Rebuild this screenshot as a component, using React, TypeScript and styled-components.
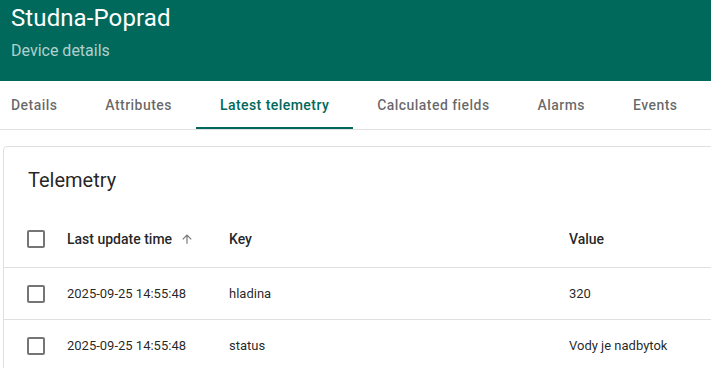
import React from "react";
import styled, { createGlobalStyle } from "styled-components";

const Global = createGlobalStyle`
  html, body { margin: 0; padding: 0; background: #fff; overflow: hidden; }
  body { font-family: Roboto, "Noto Sans", sans-serif; width: 711px; height: 368px; }
`;

const Page = styled.div`
  width: 711px;
  height: 368px;
  overflow: hidden;
  display: flex;
  flex-direction: column;
  & > * { flex-shrink: 0; }
`;

const Header = styled.header`
  background: #00695c;
  height: 81px;
  box-sizing: border-box;
  padding: 2px 11px 0;
  color: #fff;
  display: flex;
  flex-direction: column;
`;

const Title = styled.h1`
  margin: 0;
  font-size: 24px;
  font-weight: 400;
  line-height: 32px;
  letter-spacing: 0.1px;
`;

const Subtitle = styled.div`
  margin-top: 5px;
  font-size: 16px;
  line-height: 24px;
  color: rgba(255, 255, 255, 0.7);
`;

const TabBar = styled.nav`
  height: 49px;
  box-sizing: border-box;
  border-bottom: 1px solid #e0e0e0;
  display: flex;
  overflow: hidden;
`;

const TabList = styled.div`
  display: flex;
  margin-left: -13px;
`;

const Tab = styled.div<{ $active?: boolean }>`
  height: 48px;
  padding: 2px 24px 0;
  box-sizing: border-box;
  display: flex;
  align-items: center;
  justify-content: center;
  font-size: 14px;
  font-weight: 500;
  letter-spacing: 0.45px;
  white-space: nowrap;
  color: ${(p) => (p.$active ? "#00695c" : "rgba(0,0,0,0.6)")};
  border-bottom: 2px solid ${(p) => (p.$active ? "#00695c" : "transparent")};
`;

const Card = styled.section`
  margin: 16px 0 0 3px;
  width: 760px;
  border: 1px solid #e0e0e0;
  border-radius: 4px;
  background: #fff;
  flex: 1 0 auto;
`;

const CardTitle = styled.div`
  height: 64px;
  padding: 2px 24px 0;
  display: flex;
  align-items: center;
  font-size: 20px;
  font-weight: 400;
  color: rgba(0, 0, 0, 0.87);
  box-sizing: border-box;
`;

const Row = styled.div<{ $head?: boolean }>`
  display: grid;
  grid-template-columns: 63px 162px 340px 1fr;
  align-items: center;
  height: ${(p) => (p.$head ? "57px" : "52px")};
  border-bottom: 1px solid #e0e0e0;
  font-size: ${(p) => (p.$head ? "14px" : "13px")};
  font-weight: ${(p) => (p.$head ? 500 : 400)};
  color: rgba(0, 0, 0, 0.87);
  box-sizing: border-box;
`;

const CheckCell = styled.div`
  padding-left: 23px;
  display: flex;
  align-items: center;
`;

const Box = styled.span`
  width: 18px;
  height: 18px;
  box-sizing: border-box;
  border: 2px solid rgba(0, 0, 0, 0.54);
  border-radius: 2px;
  display: inline-block;
`;

const Cell = styled.div`
  display: flex;
  align-items: center;
  gap: 8px;
  white-space: nowrap;
`;

const SortArrow = () => (
  <svg width="14" height="14" viewBox="0 0 24 24" aria-hidden>
    <path d="M4 12l1.41 1.41L11 7.83V20h2V7.83l5.58 5.59L20 12l-8-8-8 8z" fill="rgba(0,0,0,0.54)" />
  </svg>
);

const rows = [
  { t: "2025-09-25 14:55:48", k: "hladina", v: "320" },
  { t: "2025-09-25 14:55:48", k: "status", v: "Vody je nadbytok" },
];

export default function App() {
  return (
    <Page>
      <Global />
      <Header>
        <Title>Studna-Poprad</Title>
        <Subtitle>Device details</Subtitle>
      </Header>
      <TabBar>
        <TabList>
          <Tab>Details</Tab>
          <Tab>Attributes</Tab>
          <Tab $active>Latest telemetry</Tab>
          <Tab>Calculated fields</Tab>
          <Tab>Alarms</Tab>
          <Tab>Events</Tab>
        </TabList>
      </TabBar>
      <Card>
        <CardTitle>Telemetry</CardTitle>
        <Row $head>
          <CheckCell><Box /></CheckCell>
          <Cell>Last update time <SortArrow /></Cell>
          <Cell>Key</Cell>
          <Cell>Value</Cell>
        </Row>
        {rows.map((r) => (
          <Row key={r.k}>
            <CheckCell><Box /></CheckCell>
            <Cell>{r.t}</Cell>
            <Cell>{r.k}</Cell>
            <Cell>{r.v}</Cell>
          </Row>
        ))}
      </Card>
    </Page>
  );
}
